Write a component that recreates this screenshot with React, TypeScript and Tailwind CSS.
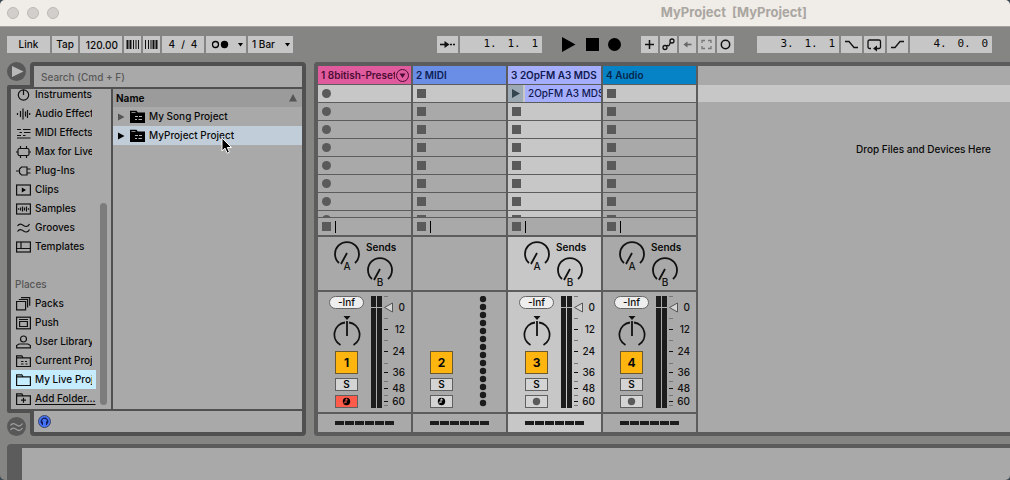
import { useState, type ReactNode } from 'react';

interface Track {
  id: number;
  name: string;
  headerClass: string;
  kind: 'instrument' | 'midi' | 'audio';
  armed?: boolean;
  armable?: boolean;
  selected?: boolean;
  clip?: string;
}

const tracks: Track[] = [
  { id: 1, name: '1 8bitish-Preset', headerClass: 'bg-[#e05a9e] text-[#4b0d33]', kind: 'instrument', armed: true, armable: true },
  { id: 2, name: '2 MIDI', headerClass: 'bg-[#6a8ee6] text-[#0d1d55]', kind: 'midi' },
  { id: 3, name: '3 2OpFM A3 MDS', headerClass: 'bg-[#a4aefd] text-[#10184f]', kind: 'instrument', selected: true, clip: '2OpFM A3 MDS' },
  { id: 4, name: '4 Audio', headerClass: 'bg-[#0683c7] text-[#06264a]', kind: 'audio' },
];

const SLOTS = [0, 1, 2, 3, 4, 5, 6, 7];

const categories: { label: string; icon: ReactNode }[] = [
  { label: 'Instruments', icon: <><circle cx="7.5" cy="7" r="5.2" /><path d="M7.5 1.8V7" /></> },
  { label: 'Audio Effects', icon: <path d="M1.5 6v2M4.5 4v6M7 1.5v11M9.5 4.5v5M11.5 3v8M13.7 6v2" /> },
  { label: 'MIDI Effects', icon: <path d="M1 3.5h4M7 3.500h7.500M3.500 6.500h2.500M8 6.500h6.500M1 9.500h4M7 9.500h2.500M1 12h13.500" /> },
  { label: 'Max for Live', icon: <><rect x="2" y="3.5" width="11" height="7" rx="1.5" /><path d="M4.5 1v2.5M10.5 1v2.5M4.5 10.5V13M10.5 10.5V13M0 7h2M13 7h2" /></> },
  { label: 'Plug-Ins', icon: <path d="M0 7h3.5M5.5 3H11v8H5.5L3.5 9V5zM11 5h3.5M11 9h3.5" /> },
  { label: 'Clips', icon: <><rect x="0.6" y="2" width="13.8" height="10" /><path d="M5.8 4.5v5L10 7z" fill="#000" stroke="none" /></> },
  { label: 'Samples', icon: <><rect x="0.6" y="2" width="13.8" height="10" /><path d="M2.5 6.3v1.4M4.5 5.5v3M6.5 4.5v5M8.5 5.5v3M10.5 4.5v5M12.5 6.3v1.4" /></> },
  { label: 'Grooves', icon: <path d="M1.5 5c2-3 4-2 6-.5S12 6 13.5 3M1.5 10.5c2-3 4-2 6-.5s4.5 1.5 6-1.5" /> },
  { label: 'Templates', icon: <><rect x="0.6" y="2" width="13.8" height="10" /><path d="M.6 8.5h13.8M5 2v6.5" /></> },
];

const places: { label: string; icon: ReactNode; link?: boolean }[] = [
  { label: 'Packs', icon: <path d="M.6 4.5h9v8.3h-9zM2.8 2.5h8.800v8M5 .7h8.700v8" /> },
  { label: 'Push', icon: <><rect x="0.6" y="1.2" width="13.8" height="11.6" /><path d="M3 3.5h9M3.6 5.500h7.800v5H3.600z" /></> },
  { label: 'User Library', icon: <><circle cx="7.5" cy="4" r="3" /><path d="M3 9h9l2.400 1.500v2.300H.6v-2.300z" /></> },
  { label: 'Current Project', icon: <path d="M.6 12.500V1.800h5.200l1.200 2h7.400v8.700zM.6 3.800H7M5 7.500h2.500M9 7.500h2M5 10h2.500M9.500 10h2" /> },
  { label: 'My Live Projects', icon: <path d="M.6 12.500V1.800h5.200l1.200 2h7.400v8.700zM.6 3.800H7" /> },
  { label: 'Add Folder...', link: true, icon: <path d="M.6 12.500V1.800h5.200l1.200 2h7.400v8.700zM.6 3.800H7M7.500 5.700v5M5 8.200h5" /> },
];

const cell = 'flex h-[17px] shrink-0 items-center justify-center bg-[#c6c6c6]';

function ToolIcon({ label, width = 'w-[17px]', children }: { label: string; width?: string; children: ReactNode }) {
  return (
    <button aria-label={label} className={`${cell} ${width}`}>
      <svg width="17" height="17" viewBox="0 0 17 17" fill="none" stroke="#111" strokeWidth="1.3">
        {children}
      </svg>
    </button>
  );
}

function Position({ label, values }: { label: string; values: number[] }) {
  return (
    <button aria-label={label} className={`${cell} w-[82px] font-['DejaVu_Sans_Mono',monospace] text-[11px]`}>
      <span className="flex w-full justify-end pr-1">
        <span className="w-6 text-left">{values[0]}.</span>
        <span className="w-6 text-left">{values[1]}.</span>
        <span>{values[2]}</span>
      </span>
    </button>
  );
}

function Toolbar() {
  return (
    <div className="flex h-[35px] shrink-0 items-center pr-[18px] pl-[7px]">
      <div className="flex gap-[2px]">
        <button className={`${cell} w-[43px]`}>Link</button>
        <button className={`${cell} w-[26px]`}>Tap</button>
        <input aria-label="Tempo" defaultValue="120.00" className="h-[17px] w-[42px] bg-[#c6c6c6] pr-1 text-right" />
        <ToolIcon label="Nudge down">
          <path d="M3.500 4v9M6.500 4v9" strokeWidth="2" />
          <path d="M9.500 4v9M12 4v9M14.500 4v9" strokeWidth="1" />
        </ToolIcon>
        <ToolIcon label="Nudge up">
          <path d="M2.500 4v9M5.500 4v9M8 4v9" strokeWidth="1" />
          <path d="M10.500 4v9M13.500 4v9" strokeWidth="2" />
        </ToolIcon>
        <button className={`${cell} w-[42px] gap-[6px]`}><span>4</span><span>/</span><span>4</span></button>
        <button aria-label="Metronome" className={`${cell} w-10`}>
          <svg width="40" height="17" viewBox="0 0 40 17">
            <circle cx="9.500" cy="8.500" r="3" fill="none" stroke="#000" strokeWidth="1.300" />
            <circle cx="18.500" cy="8.500" r="3.700" />
            <path d="M32 7h5l-2.500 3.500z" />
          </svg>
        </button>
        <div className="relative">
          <select aria-label="Quantization" className="h-[17px] w-[45px] appearance-none bg-[#c6c6c6] pl-1">
            <option>1 Bar</option>
          </select>
          <svg className="pointer-events-none absolute top-0 right-0" width="11" height="17" viewBox="0 0 11 17">
            <path d="M3 7h5l-2.500 3.500z" />
          </svg>
        </div>
      </div>

      <div className="ml-auto flex gap-[2px]">
        <ToolIcon label="Follow" width="w-[21px]">
          <path d="M1 8.500h6" strokeWidth="1.600" />
          <path d="M5.500 5v7l5-3.500z" fill="#111" stroke="none" />
          <path d="M11 8.500h2M14 8.500h2" />
        </ToolIcon>
        <Position label="Arrangement position" values={[1, 1, 1]} />
      </div>

      <div className="ml-5 flex items-center gap-[9px]">
        <button aria-label="Play"><svg width="15" height="15" viewBox="0 0 15 15"><path d="M0 0v15l13.500-7.500z" /></svg></button>
        <button aria-label="Stop"><svg width="13" height="13"><rect width="13" height="13" /></svg></button>
        <button aria-label="Record"><svg width="13" height="13" viewBox="0 0 13 13"><circle cx="6.500" cy="6.500" r="6.500" /></svg></button>
      </div>

      <div className="ml-5 flex gap-[2px]">
        <ToolIcon label="Overdub"><path d="M8.500 4v9M4 8.500h9" strokeWidth="1.500" /></ToolIcon>
        <ToolIcon label="Automation arm">
          <circle cx="5" cy="11.500" r="2" />
          <circle cx="12" cy="5" r="2" />
          <path d="M6.500 10c1-2 1.500 1 2.500-.5s.5-2 1.500-3" />
        </ToolIcon>
        <ToolIcon label="Re-enable automation">
          <path d="M6 8.500h6.500" stroke="#666" strokeWidth="1.600" />
          <path d="M8.500 5.500v6l-4-3z" fill="#666" stroke="none" />
        </ToolIcon>
        <ToolIcon label="Capture"><path d="M4 7V4.500h3M10 4.500h3V7M13 10v2.500h-3M7 12.500H4V10" stroke="#777" /></ToolIcon>
        <ToolIcon label="Session record"><circle cx="8.500" cy="8.500" r="4.200" strokeWidth="1.500" /></ToolIcon>
      </div>

      <div className="ml-[23px] flex gap-[2px]">
        <Position label="Loop start" values={[3, 1, 1]} />
        <ToolIcon label="Punch in" width="w-[21px]"><path d="M2 5.500h4l5 6h4" /></ToolIcon>
        <ToolIcon label="Loop" width="w-[21px]">
          <path d="M5 12.500H3.500a1.500 1.500 0 0 1-1.500-1.500V5.500A1.500 1.500 0 0 1 3.500 4h9.500A1.500 1.500 0 0 1 14.500 5.500V11a1.500 1.500 0 0 1-1.500 1.500h-2" />
          <path d="M11 9.500v6l-4-3z" fill="#111" stroke="none" />
        </ToolIcon>
        <ToolIcon label="Punch out" width="w-[21px]"><path d="M2 11.500h4l5-6h4" /></ToolIcon>
        <Position label="Loop length" values={[4, 0, 0]} />
      </div>
    </div>
  );
}

function SidebarItem({ label, icon, link, active }: { label: string; icon: ReactNode; link?: boolean; active?: boolean }) {
  return (
    <button className={`flex h-[19px] shrink-0 items-center gap-1 pl-[5px] text-left ${active ? 'bg-[#c6ecff]' : ''} ${link ? '' : 'pr-1'}`}>
      <svg className="shrink-0" width="15" height="14" viewBox="0 0 15 14" fill="none" stroke="#111" strokeWidth="1.200">
        {icon}
      </svg>
      <span className={`min-w-0 flex-1 overflow-hidden whitespace-nowrap ${link ? 'underline underline-offset-2' : ''}`}>{label}</span>
    </button>
  );
}

function FileRow({ name, selected }: { name: string; selected?: boolean }) {
  return (
    <button className={`flex h-[19px] items-center pl-[5px] text-left ${selected ? 'bg-[#c1ced9]' : ''}`}>
      <svg width="7" height="8" viewBox="0 0 7 8" fill={selected ? '#000' : '#555'}><path d="M0 .5v7L6.500 4z" /></svg>
      <svg className="ml-[5px]" width="15" height="14" viewBox="0 0 15 14">
        <path d="M0 13V.8h6.500L7.800 2.500H15V13z" />
        <path d="M1.500 2.500h4" stroke="#888" />
        <path d="M5 6.500h3M9 6.500h3M5 9.500h2M8.500 9.500h3.500" stroke="#b5b5b5" />
      </svg>
      <span className="ml-1">{name}</span>
    </button>
  );
}

function Browser() {
  const [place, setPlace] = useState('My Live Projects');

  return (
    <div className="flex w-[299px] shrink-0 flex-col">
      {/* Search */}
      <div className="flex h-[25px] shrink-0">
        <div className="flex w-[23px] flex-col justify-between">
          <button aria-label="Hide browser">
            <svg width="19" height="19" viewBox="0 0 19 19">
              <circle cx="9.500" cy="9.500" r="9.500" fill="#585858" />
              <path d="M5 4v11l11.500-5.500z" fill="#b9b9b9" />
            </svg>
          </button>
          <div className="h-[2px] rounded-tl-[3px] bg-[#505050]" />
        </div>
        <div className="flex-1 rounded-t-[4px] bg-[#505050] px-1 pt-1">
          <input
            aria-label="Search"
            placeholder="Search (Cmd + F)"
            className="h-[21px] w-full bg-[#a9a9a9] px-[7px] placeholder:text-[#585858]"
          />
        </div>
      </div>

      {/* Categories and file list */}
      <div className="flex min-h-0 flex-1 gap-[2px] bg-[#505050] px-1 py-[2px]">
        <div className="flex w-[100px] gap-1 overflow-hidden bg-[#a9a9a9]">
          <nav className="flex w-[85px] flex-col justify-end overflow-hidden pb-px">
            {categories.map((item) => (
              <SidebarItem key={item.label} label={item.label} icon={item.icon} />
            ))}
            <h2 className="flex h-[38px] shrink-0 items-end pb-[3px] pl-1 leading-[13px] text-[#555]">Places</h2>
            {places.map((item) => (
              <div key={item.label} className="flex shrink-0 flex-col" onClick={() => setPlace(item.label)}>
                <SidebarItem label={item.label} icon={item.icon} link={item.link} active={item.label === place} />
              </div>
            ))}
          </nav>
          <div className="mb-1 h-[202px] w-[7px] self-end rounded-full bg-[#7c7c7c]" />
        </div>
        <div className="flex flex-1 flex-col bg-[#a9a9a9]">
          <button className="flex h-[18px] items-center justify-between bg-[#9b9b9b] pr-[5px] pl-[3px] font-bold">
            Name
            <svg width="8" height="8" viewBox="0 0 8 8"><path d="M0 7.500h8L4 0z" fill="#555" /></svg>
          </button>
          <FileRow name="My Song Project" />
          <FileRow name="MyProject Project" selected />
        </div>
      </div>

      {/* Preview */}
      <div className="flex h-[25px] shrink-0">
        <div className="flex w-[23px] flex-col justify-between">
          <div className="h-[2px] rounded-bl-[3px] bg-[#505050]" />
          <button aria-label="Groove pool">
            <svg width="19" height="19" viewBox="0 0 19 19" fill="none" stroke="#a0a0a0" strokeWidth="1.300">
              <circle cx="9.500" cy="9.500" r="9.500" fill="#585858" stroke="none" />
              <path d="M3.500 8.500c2-3 4-2 6-.5s4 1.500 6-1.500M3.500 13c2-3 4-2 6-.5s4 1.500 6-1.500" />
            </svg>
          </button>
        </div>
        <div className="flex-1 rounded-b-[4px] bg-[#505050] px-1 pb-1">
          <div className="flex h-[21px] items-center bg-[#a9a9a9] pl-1">
            <button aria-label="Preview">
              <svg width="13" height="13" viewBox="0 0 13 13">
                <circle cx="6.500" cy="6.500" r="6" fill="#4673f5" stroke="#3c4668" />
                <path d="M4 8.500A3.200 3.200 0 1 1 9 8.500" fill="none" stroke="#101c55" strokeWidth="1.200" />
                <path d="M3.500 6.500H5V10H4zM9.500 6.500H8V10h1z" fill="#101c55" />
              </svg>
            </button>
          </div>
        </div>
      </div>
    </div>
  );
}

function SendKnob({ name }: { name: string }) {
  return (
    <label className="relative block h-[34px] w-7">
      <svg width="28" height="34" viewBox="0 0 28 34" fill="none" stroke="#111" strokeWidth="1.800">
        <path d="M6 23A12 12 0 1 1 22 23M14 13L8 24" />
        <text x="14" y="30" textAnchor="middle" fontSize="10" fill="#111" stroke="none">{name}</text>
      </svg>
      <input type="range" aria-label={`Send ${name}`} defaultValue={0} className="absolute inset-0 w-7 opacity-0" />
    </label>
  );
}

function PanKnob() {
  return (
    <label className="relative mt-[7px] block h-8 w-7">
      <svg width="28" height="32" viewBox="0 0 28 32" fill="none" stroke="#111" strokeWidth="1.800">
        <path d="M12 6.500A12.100 12.100 0 0 0 7.500 29M16 6.500A12.100 12.100 0 0 1 20.500 29M14 5v15" />
        <path d="M10.500 0h7L14 4z" fill="#111" stroke="none" />
      </svg>
      <input type="range" aria-label="Pan" defaultValue={50} className="absolute inset-0 w-7 opacity-0" />
    </label>
  );
}

const scale = [
  { y: 11, label: '0' },
  { y: 33, label: '12' },
  { y: 55, label: '24' },
  { y: 76, label: '36' },
  { y: 92, label: '48' },
  { y: 105, label: '60' },
];

function Meter() {
  return (
    <svg width="36" height="112" viewBox="0 0 36 112">
      <path d="M0 0h5v112H0zM6 0h5v112H6z" fill="#1c1c1c" />
      <path d="M0 11.500h11" stroke="#b0b0b0" />
      <path d="M13 .5h4M13 22.500h4M13 44.500h4M13 67.500h4M13 85.500h4M13 99.500h4M13 109.500h4" stroke="#777" />
      <path d="M13 33.500h4M13 55.500h4M13 76.500h4M13 92.500h4M13 105.500h4" stroke="#111" />
      <path d="M13.500 11.500l8-4.500v9z" fill="#d5d5d5" stroke="#555" />
      {scale.map((mark) => (
        <text key={mark.label} x="34" y={mark.y + 4} textAnchor="end" fontSize="10" fill="#111">{mark.label}</text>
      ))}
    </svg>
  );
}

function MidiDots() {
  return (
    <svg className="ml-[2px]" width="12" height="112" viewBox="0 0 12 112" fill="#1c1c1c">
      {Array.from({ length: 14 }, (_, i) => (
        <circle key={i} cx="4" cy={3 + i * 8} r="3.200" />
      ))}
    </svg>
  );
}

function ArmIcon({ track }: { track: Track }) {
  if (track.kind === 'midi' || track.armed) {
    return (
      <svg width="9" height="9" viewBox="0 0 9 9">
        <circle cx="4.500" cy="4.500" r="3.700" />
        <path d="M2 6.500a1 1 0 0 1 2-.8V2h1v1.500" fill="none" stroke={track.armed ? '#ff5b4a' : '#ddd'} />
      </svg>
    );
  }
  return <svg width="9" height="9"><circle cx="4.500" cy="4.500" r="3.700" fill="#5a5a5a" /></svg>;
}

function TrackColumn({ track }: { track: Track }) {
  const [active, setActive] = useState(true);
  const bg = track.selected ? 'bg-[#c7c7c7]' : 'bg-[#a9a9a9]';
  const box = 'flex h-[13px] w-[23px] items-center justify-center border border-[#606060]';

  return (
    <section className="flex w-[95px] shrink-0 flex-col border-r-2 border-[#5c5c5c]">
      <button className={`flex h-[19px] shrink-0 items-center border-b border-[#5c5c5c] pl-[3px] text-left font-semibold ${track.headerClass}`}>
        <span className="min-w-0 flex-1 overflow-hidden whitespace-nowrap">{track.name}</span>
        {track.id === 1 && (
          <svg className="mr-px shrink-0" width="15" height="15" viewBox="0 0 15 15">
            <circle cx="7.500" cy="7.500" r="6" fill="none" stroke="#4b0d33" />
            <path d="M4.500 5.500h6l-3 4.500z" fill="#4b0d33" />
          </svg>
        )}
      </button>

      {/* Clip slots */}
      <div className={`min-h-0 flex-1 overflow-hidden border-b border-[#5c5c5c] ${bg}`}>
        {SLOTS.map((slot) => (
          <div key={slot} className={`flex h-[18px] border-b border-[#5c5c5c] ${slot === 0 ? 'bg-[#c7c7c7]' : ''}`}>
            {slot === 0 && track.clip ? (
              <>
                <button aria-label="Launch clip" className="flex w-[15px] shrink-0 items-center justify-center bg-[#9daab4]">
                  <svg width="8" height="9" viewBox="0 0 8 9"><path d="M0 0v9l8-4.500z" fill="#34454f" /></svg>
                </button>
                <button className="ml-[2px] flex-1 overflow-hidden bg-[#a4aefd] pl-[3px] text-left whitespace-nowrap text-[#10184f]">{track.clip}</button>
              </>
            ) : (
              <button aria-label="Clip slot" className="pl-1">
                <span className={`block size-[9px] bg-[#5a5a5a] ${track.armable ? 'rounded-full' : ''}`} />
              </button>
            )}
          </div>
        ))}
      </div>
      <div className="flex h-[19px] shrink-0 items-center gap-1 border-b-2 border-[#5c5c5c] bg-[#a9a9a9] pl-1">
        <button aria-label="Stop clips" className="size-[9px] bg-[#5a5a5a]" />
        <span className="h-3 w-px bg-black" />
      </div>

      {/* Sends */}
      <div className={`flex h-[55px] shrink-0 gap-[5px] border-b-2 border-[#5c5c5c] pt-[3px] pl-[15px] ${bg}`}>
        {track.kind !== 'midi' && (
          <>
            <SendKnob name="A" />
            <div>
              <h3 className="h-4 leading-[14px] font-semibold">Sends</h3>
              <SendKnob name="B" />
            </div>
          </>
        )}
      </div>

      {/* Mixer */}
      <div className={`flex h-[122px] shrink-0 gap-[7px] border-b-2 border-[#5c5c5c] py-1 pl-[11px] ${bg}`}>
        <div className="flex w-[35px] flex-col items-center justify-end">
          {track.kind !== 'midi' && (
            <>
              <button className="h-[13px] w-full rounded-full border border-[#666] bg-[#eee] leading-[11px]">-Inf</button>
              <PanKnob />
            </>
          )}
          <button
            aria-pressed={active}
            onClick={() => setActive(!active)}
            className={`mt-[3px] h-[23px] w-[23px] border border-[#6b5a30] text-[12px] font-bold ${active ? 'bg-[#ffb50f]' : 'bg-[#a9a9a9]'}`}
          >
            {track.id}
          </button>
          <button className={`${box} mt-1 bg-[#d4d4d4] font-semibold`}>S</button>
          <button aria-label="Arm" className={`${box} mt-1 ${track.armed ? 'bg-[#ff5b4a]' : 'bg-[#d4d4d4]'}`}>
            <ArmIcon track={track} />
          </button>
        </div>
        {track.kind === 'midi' ? <div className="pl-[11px]"><MidiDots /></div> : <Meter />}
      </div>

      {/* Performance impact */}
      <div className={`flex h-[18px] shrink-0 items-center gap-px pl-[17px] ${bg}`}>
        {[0, 1, 2, 3, 4, 5].map((i) => (
          <span key={i} className="h-1 w-[9px] bg-[#1c1c1c]" />
        ))}
      </div>
    </section>
  );
}

export default function App() {
  return (
    <div className="h-screen bg-[#3b4a52]">
      <div className="flex h-full flex-col overflow-hidden rounded-[5px] bg-[#858583] font-['Inter','Liberation_Sans',sans-serif] text-[10px] font-medium text-[#0a0a0a]">
        <header className="flex h-[27px] shrink-0 items-center justify-between border-b border-[#a5a29f] bg-[#f0ece7] pr-[203px] pl-[7px]">
          <div className="flex gap-2">
            <button aria-label="Close" className="size-3 rounded-full border border-[#bdb9b5] bg-[#d2cecb]" />
            <button aria-label="Minimize" className="size-3 rounded-full border border-[#bdb9b5] bg-[#d2cecb]" />
            <button aria-label="Zoom" className="size-3 rounded-full border border-[#bdb9b5] bg-[#d2cecb]" />
          </div>
          <h1 className="text-[13px] font-bold whitespace-pre text-[#aaa6a1]">MyProject  [MyProject]</h1>
        </header>

        <Toolbar />

        <main className="flex min-h-0 flex-1 gap-2 pl-[7px]">
          <Browser />
          <div className="flex min-w-0 flex-1 rounded-l-[4px] border-y-4 border-l-4 border-[#5c5c5c] bg-[#a9a9a9]">
            {tracks.map((track) => (
              <TrackColumn key={track.id} track={track} />
            ))}
            <div className="flex-1">
              <div className="mt-[19px] h-[17px] bg-[#c7c7c7]" />
              <p className="mt-10 pr-[19px] text-right leading-[14px]">Drop Files and Devices Here</p>
            </div>
          </div>
        </main>

        <footer className="mt-2 ml-[7px] h-9 shrink-0 rounded-tl-[4px] bg-[#5c5c5c] pt-1 pl-[15px]">
          <div className="h-full bg-[#a9a9a9]" />
        </footer>
      </div>

      {/* Mouse pointer */}
      <svg className="pointer-events-none absolute top-[137px] left-[221px]" width="12" height="18" viewBox="0 0 12 18">
        <path d="M1 1v13l3-2.800 2.200 5 2.300-1L6.300 10.500H10.500z" fill="#000" stroke="#fff" />
      </svg>
    </div>
  );
}
